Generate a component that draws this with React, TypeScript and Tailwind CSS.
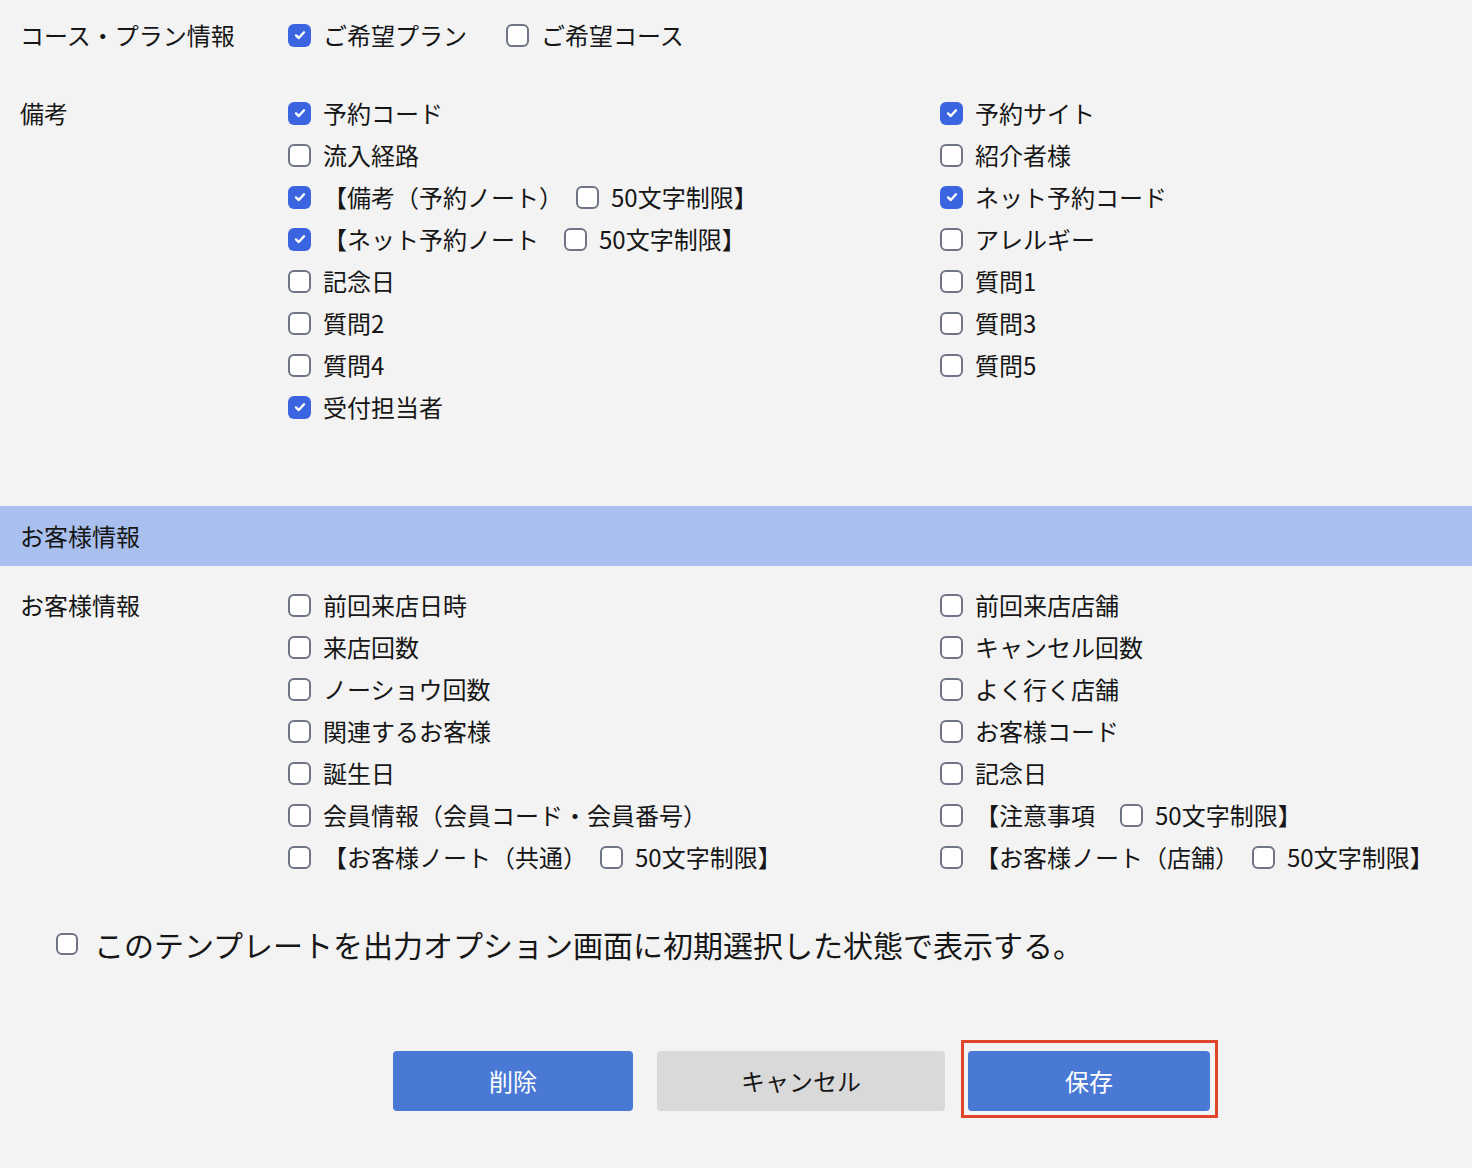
import React from "react";

type Opt = { label: string; checked?: boolean; sub?: { gap: number; label: string } };

function Box({ checked, size = 23 }: { checked?: boolean; size?: number }) {
  if (checked) {
    return (
      <span
        className="flex shrink-0 items-center justify-center rounded-[6px] bg-[#3a64e0]"
        style={{ width: size, height: size }}
      >
        <svg width="14" height="14" viewBox="0 0 14 14" fill="none">
          <path d="M3 7.4 L5.8 10 L11 4.3" stroke="white" strokeWidth="2.4" strokeLinecap="round" strokeLinejoin="round" />
        </svg>
      </span>
    );
  }
  return (
    <span
      className="block shrink-0 rounded-[6px] border-2 border-[#6f7486] bg-white"
      style={{ width: size, height: size }}
    />
  );
}

function Option({ o }: { o: Opt }) {
  return (
    <div className="flex h-[42px] items-center">
      <Box checked={o.checked} />
      <span className="ml-[12px] whitespace-nowrap">{o.label}</span>
      {o.sub && (
        <>
          <span style={{ width: o.sub.gap + 1 }} className="shrink-0" />
          <Box />
          <span className="ml-[12px] whitespace-nowrap">{o.sub.label}</span>
        </>
      )}
    </div>
  );
}

const bikoLeft: Opt[] = [
  { label: "予約コード", checked: true },
  { label: "流入経路" },
  { label: "【備考（予約ノート）", checked: true, sub: { gap: 12, label: "50文字制限】" } },
  { label: "【ネット予約ノート", checked: true, sub: { gap: 24, label: "50文字制限】" } },
  { label: "記念日" },
  { label: "質問2" },
  { label: "質問4" },
  { label: "受付担当者", checked: true },
];
const bikoRight: Opt[] = [
  { label: "予約サイト", checked: true },
  { label: "紹介者様" },
  { label: "ネット予約コード", checked: true },
  { label: "アレルギー" },
  { label: "質問1" },
  { label: "質問3" },
  { label: "質問5" },
];
const custLeft: Opt[] = [
  { label: "前回来店日時" },
  { label: "来店回数" },
  { label: "ノーショウ回数" },
  { label: "関連するお客様" },
  { label: "誕生日" },
  { label: "会員情報（会員コード・会員番号）" },
  { label: "【お客様ノート（共通）", sub: { gap: 12, label: "50文字制限】" } },
];
const custRight: Opt[] = [
  { label: "前回来店店舗" },
  { label: "キャンセル回数" },
  { label: "よく行く店舗" },
  { label: "お客様コード" },
  { label: "記念日" },
  { label: "【注意事項", sub: { gap: 24, label: "50文字制限】" } },
  { label: "【お客様ノート（店舗）", sub: { gap: 12, label: "50文字制限】" } },
];

export default function App() {
  return (
    <div
      className="min-h-[1168px] w-full bg-[#f3f3f3] text-[24px] leading-none text-[#161616]"
      style={{ fontFamily: '"Noto Sans CJK JP", "Noto Sans", sans-serif' }}
    >
      {/* Course / Plan */}
      <div className="grid grid-cols-[268px_1fr] pl-[20px] pt-[14px]">
        <div className="flex h-[42px] items-center">コース・プラン情報</div>
        <div className="flex">
          <div className="w-[218px]">
            <Option o={{ label: "ご希望プラン", checked: true }} />
          </div>
          <Option o={{ label: "ご希望コース" }} />
        </div>
      </div>

      {/* Biko */}
      <div className="mt-[36px] grid grid-cols-[268px_652px_1fr] pl-[20px]">
        <div className="flex h-[42px] items-center">備考</div>
        <div className="flex flex-col">
          {bikoLeft.map((o, i) => (
            <Option key={i} o={o} />
          ))}
        </div>
        <div className="flex flex-col">
          {bikoRight.map((o, i) => (
            <Option key={i} o={o} />
          ))}
        </div>
      </div>

      {/* Band */}
      <div className="mt-[78px] flex h-[60px] items-center bg-[#a9c0ee] pl-[20px]">お客様情報</div>

      {/* Customer */}
      <div className="mt-[18px] grid grid-cols-[268px_652px_1fr] pl-[20px]">
        <div className="flex h-[42px] items-center">お客様情報</div>
        <div className="flex flex-col">
          {custLeft.map((o, i) => (
            <Option key={i} o={o} />
          ))}
        </div>
        <div className="flex flex-col">
          {custRight.map((o, i) => (
            <Option key={i} o={o} />
          ))}
        </div>
      </div>

      {/* Default selection */}
      <div className="mt-[46px] flex h-[40px] items-center pl-[56px]">
        <Box size={22} />
        <span className="ml-[16px] whitespace-nowrap text-[30px]">
          このテンプレートを出力オプション画面に初期選択した状態で表示する。
        </span>
      </div>

      {/* Buttons */}
      <div className="mt-[76px] flex items-start pb-[49px] pl-[393px]">
        <button className="mt-[11px] flex h-[60px] w-[240px] items-center justify-center rounded-[4px] bg-[#4a79d5] text-white">
          削除
        </button>
        <button className="ml-[24px] mt-[11px] flex h-[60px] w-[288px] items-center justify-center rounded-[4px] bg-[#d9d9d9] text-[#161616]">
          キャンセル
        </button>
        <div className="ml-[16px] border-[3px] border-[#e0452b] pb-[4px] pl-[4px] pr-[5px] pt-[8px]">
          <button className="flex h-[60px] w-[242px] items-center justify-center rounded-[4px] bg-[#4a79d5] text-white">
            保存
          </button>
        </div>
      </div>
    </div>
  );
}
